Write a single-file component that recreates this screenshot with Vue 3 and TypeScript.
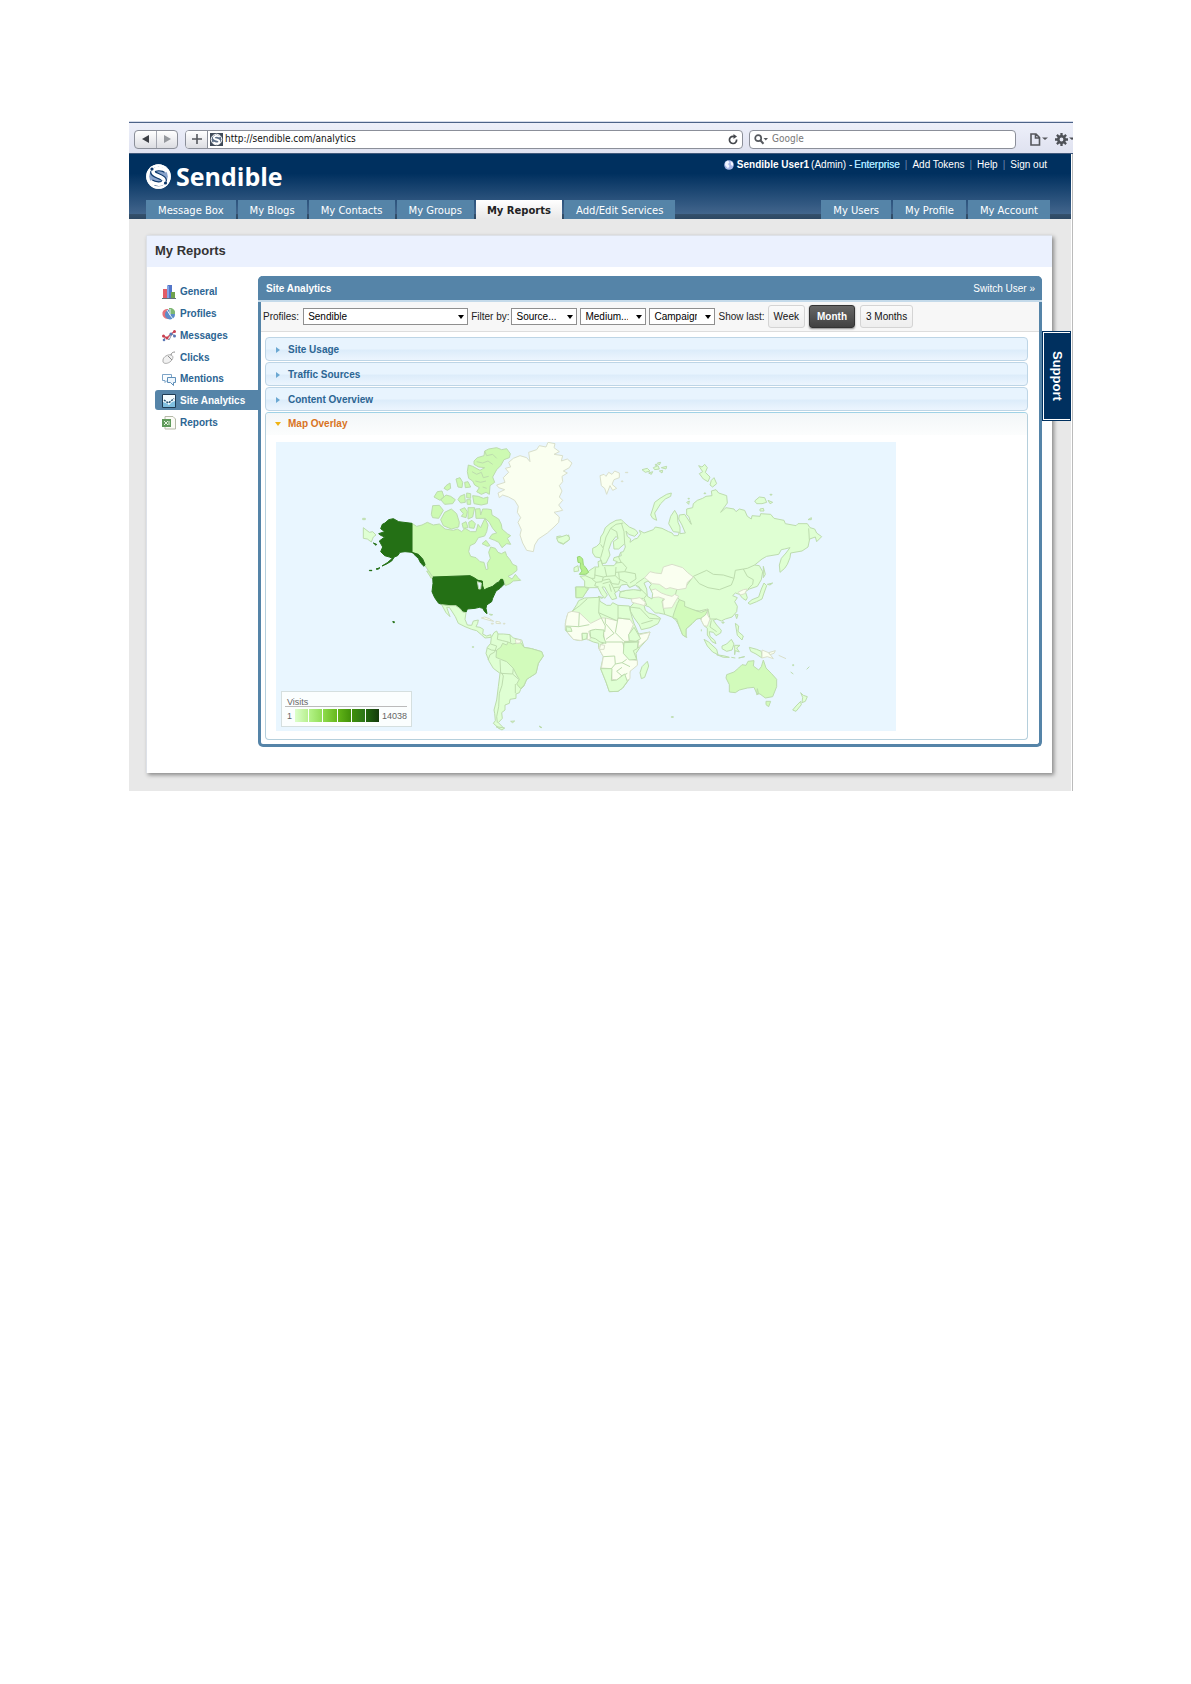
<script setup lang="ts">
import { ref } from 'vue'

interface Land { d: string; tone: string }
interface Region { shift: string; lands: Land[] }

const leftTabs = ['Message Box', 'My Blogs', 'My Contacts', 'My Groups', 'My Reports', 'Add/Edit Services']
const rightTabs = ['My Users', 'My Profile', 'My Account']
const reports = ['General', 'Profiles', 'Messages', 'Clicks', 'Mentions', 'Site Analytics', 'Reports']
const sections = ['Site Usage', 'Traffic Sources', 'Content Overview']
const ranges = ['Week', 'Month', '3 Months']

const url = ref('http://sendible.com/analytics')
const search = ref('')
const range = ref('Month')

const swatches = [
  ['#dcffcb', '#b8f08e'], ['#b4f388', '#92dd58'], ['#8edb4c', '#66b81c'],
  ['#62b518', '#419109'], ['#3f8f0a', '#2b741a'], ['#22680f', '#153a0c'],
]

const regions: Region[] = [
  {
    shift: 'translate(222 -21)',
    lands: [
      { tone: 'pale', d: 'M40 278L58 292L68 290L78 300L70 306L64 321L52 312L40 310ZM38 250h8v4h-8Z' },
      { tone: 'mid', d: 'M186 265L200 274L216 270L232 262L250 270L268 267L285 282L310 286L322 282L335 290L345 280L362 290L378 290L384 268L392 278L399 262L405 250L414 270L410 290L404 303L385 308L375 325L360 332L356 350L362 364L378 368L390 380L402 382L408 404L414 402L412 385L421 370L416 352L422 336L436 340L444 352L454 356L466 350L470 362L480 374L488 388L500 393L501 406L486 418L474 424L486 432L496 418L504 428L512 436L490 438L480 446L466 452L462 436L445 440L425 455L402 464L385 440L372 430L360 422L248 426L236 408L225 392L218 370L205 358L186 352Z' },
      { tone: 'mid', d: 'M372 78L382 68L402 62L404 48L416 42L440 38L455 44L470 41L481 56L478 68L462 74L452 92L440 104L428 126L434 142L420 152L418 178L408 172L394 178L380 170L388 158L374 150L368 138L356 130L352 110L355 90L368 94L390 106L404 98L386 96L372 88Z' },
      { tone: 'mid', d: 'M368 182L385 184L400 190L414 186L412 206L394 210L372 206ZM350 174L362 176L362 190L350 188ZM350 194h12v14h-10ZM330 184L344 178L346 202L332 204L324 194ZM318 132L330 128L338 142L336 158L324 156ZM344 142L354 140L362 156L346 158ZM288 152L300 144L302 160L292 166L282 160ZM252 186L262 170L276 168L282 186L270 196ZM272 194L288 180L302 184L316 194L308 206L284 208Z' },
      { tone: 'mid', d: 'M244 238L248 212L268 211L280 226L266 250L248 248ZM272 254L284 232L304 222L320 236L328 262L326 276L304 282L280 272ZM330 224L344 218L352 230L348 248L334 244L340 236ZM354 218L374 218L368 246L354 252ZM336 266L348 260L354 278L340 280ZM356 262L366 256L376 266L372 280L358 278Z' },
      { tone: 'mid', d: 'M376 222L390 221L392 240L398 222L412 222L424 224L426 240L446 252L454 268L456 282L472 296L482 302L472 310L482 328L470 326L456 338L446 322L434 316L418 310L426 298L440 294L428 280L418 262L406 250L378 250ZM396 326L408 316L420 332L412 334Z' },
      { tone: 'line', d: 'M404 48L410 62L428 58L440 70M380 80L398 84L414 78L428 88M366 110L380 118L394 112L400 128L416 124M376 138L392 142L408 138M398 156L410 160' },
      { tone: 'usa', d: 'M92 281L97 268L105 264L116 254L130 251L146 260L186 265L186 352L165 350L150 352L143 362L133 366L125 378L108 388L96 393L112 383L127 370L118 366L104 362L92 350L98 336L88 318L104 306L92 301L86 296L104 290ZM186 352L205 358L218 372L225 388L222 394L212 384L205 370L192 358ZM70 324L80 328L78 331ZM78 402L90 398L84 403ZM58 406h8v1h-8Z' },
      { tone: 'usa', d: 'M248 426L360 422L372 428L384 436L397 438L398 452L402 465L412 460L428 454L440 444L447 441L452 433L458 433L462 448L450 460L438 468L428 490L425 500L410 510L408 520L411 536L404 530L398 520L388 517L375 520L352 522L348 532L338 530L330 520L318 521L310 512L290 512L266 505L254 488L246 470L249 445ZM128 560h5v3h-3Z' },
      { tone: 'sea', d: 'M382 440L394 444L392 462L386 462L384 450Z' },
      { tone: 'none', d: 'M440 150L465 142L460 128L476 112L466 100L482 96L476 82L490 70L510 62L530 68L540 80L536 52L560 44L568 32L588 36L594 22L615 26L612 38L628 50L612 58L638 62L634 78L652 72L666 84L658 98L640 108L652 114L636 124L638 140L628 152L636 168L628 186L638 196L626 210L638 226L612 232L628 246L626 262L612 276L592 294L565 312L554 330L550 350L530 346L518 324L510 300L514 284L504 262L512 248L502 232L505 214L494 196L476 186L458 180L448 188L444 174L464 164L446 158Z' },
      { tone: 'pale', d: 'M620 305L630 303L640 306L656 300L658 314L640 328L626 322Z' },
      { tone: 'mid', d: 'M236 408L248 426L244 430L230 408Z' },
    ],
  },
  {
    shift: 'translate(222 354)',
    lands: [
      { tone: 'pale', d: 'M275 134L300 137L318 137L330 146L338 156L348 158L345 178L352 195L365 196L370 183L385 180L383 190L378 200L390 202L400 208L398 222L410 228L422 224L424 232L405 234L395 225L380 212L365 208L345 200L325 190L316 170L298 142L290 142L300 170L288 158Z' },
      { tone: 'none', d: 'M394 174L404 171L418 176L431 184L414 180ZM438 184L450 186L452 191L438 190ZM424 190h6v2h-6ZM460 190h5v2h-5Z' },
      { tone: 'pale', d: 'M424 232L432 218L440 213L444 222L460 222L480 224L490 234L515 240L522 262L545 266L575 275L580 288L565 310L558 340L530 358L522 378L512 388L508 398L498 402L498 415L480 418L478 430L465 435L465 450L455 458L457 475L445 488L462 505L448 506L430 490L436 482L434 460L432 450L440 420L445 380L450 340L430 325L418 305L408 280L412 262L422 250Z' },
      { tone: 'low', d: 'M440 270L452 262L458 250L470 255L474 246L488 252L498 250L512 248L522 262L545 266L575 275L580 288L565 310L558 340L530 358L522 376L512 386L500 372L508 358L500 345L490 325L470 305L452 298L438 292Z' },
      { tone: 'none', d: 'M496 238L514 241L510 249L498 250Z' },
      { tone: 'line', d: 'M444 222L442 238L458 242L474 246M422 252L440 258L434 276L420 284L414 300M450 300L452 340L488 342L490 325M455 338L460 348L456 376L448 400L446 440L440 470L442 488M488 342L506 358M496 372L496 400M412 264L424 270L440 272M480 224L482 248' },
      { tone: 'pale', d: 'M482 484L494 483L488 488ZM568 498L576 503L570 502ZM438 500L464 504L456 510ZM367 260h4v2h-4ZM418 162L428 164L422 166Z' },
    ],
  },
  {
    shift: 'translate(822 -21)',
    lands: [
      { tone: 'none', d: 'M150 122L162 118L168 124L176 112L186 118L194 108L208 114L208 128L192 134L186 148L200 160L188 166L180 152L170 178L164 160L154 152ZM214 138h5v2h-5ZM226 112h8v1h-8Z' },
      { tone: 'pale', d: 'M276 104L292 100L300 108L286 112ZM296 114L308 110L304 118ZM310 98L324 92L328 102L314 104ZM322 84L332 82L328 90ZM334 98L350 94L348 102ZM328 108L338 106L336 114ZM316 88h5v3h-5Z' },
      { tone: 'pale', d: 'M302 240L308 222L314 202L330 190L350 178L364 174L362 184L346 192L332 206L322 222L314 234L320 256L308 250ZM410 202L418 198L416 208ZM414 190h4v2h-4Z' },
      { tone: 'pale', d: 'M446 92L456 96L464 88L472 98L466 112L480 126L474 140L460 132L448 116L458 110ZM484 136L492 128L500 146L488 156L480 150ZM614 198L628 186L644 188L650 202L636 206L620 206ZM654 196L668 202L660 206ZM630 222L640 220L642 228L630 228ZM774 254L784 248L784 254ZM660 178h6v2h-6ZM462 174h5v2h-5Z' },
      { tone: 'pale', d: 'M128 340L140 334L150 324L152 306L160 294L166 278L180 266L198 256L214 254L222 262L238 276L256 284L264 294L254 304L236 298L228 288L232 304L242 312L240 322L254 312L262 310L272 296L268 286L282 294L310 284L316 276L336 280L356 290L366 294L372 302L384 302L388 292L370 290L356 266L362 244L374 226L382 240L384 262L390 276L390 296L406 294L396 270L386 252L388 240L404 238L424 268L416 244L410 240L410 222L428 218L430 206L442 196L458 190L468 184L486 182L484 168L498 164L506 174L530 182L532 204L512 232L528 218L552 222L558 230L568 222L584 226L592 244L604 252L606 242L630 244L632 236L662 238L672 250L702 256L706 266L738 272L744 266L772 266L780 278L794 282L800 294L815 305L800 320L796 306L779 312L774 336L756 348L722 354L720 368L712 388L704 400L690 412L688 390L694 370L708 354L720 338L704 342L694 344L686 358L650 364L636 372L614 390L628 392L638 410L634 434L622 454L598 462L586 470L592 488L588 496L578 490L568 478L556 474L548 482L562 488L554 500L562 514L560 530L546 546L526 552L514 558L500 552L490 556L500 570L514 586L512 594L498 602L490 592L478 590L480 604L494 616L498 626L486 620L472 600L472 580L462 572L454 556L450 548L440 552L426 566L408 582L408 606L398 600L386 570L378 556L366 546L344 538L326 534L316 534L298 516L282 510L286 526L296 534L316 540L332 550L324 566L300 578L274 584L268 570L252 548L242 530L240 516L250 506L248 492L232 490L208 486L210 472L228 466L252 462L272 468L268 456L256 450L240 458L232 448L216 450L212 464L206 466L194 474L200 490L186 494L176 478L164 456L156 456L172 480L164 490L154 478L144 458L118 458L108 472L96 488L78 488L76 456L104 456L104 438L90 424L106 422L116 408L134 396L146 396L144 380L154 376L158 392L192 392L202 380L190 376L192 368L214 362L212 352L220 350L226 336L224 326L206 342L192 342L190 320L204 310L198 304L184 322L176 344L180 360L168 384L156 386L150 368L136 366L128 354Z' },
      { tone: 'line', d: 'M152 328L160 340L152 368M160 338L168 306L182 280L198 268L220 264M182 280L200 290L204 310M214 264L222 290L224 326M104 456L118 458M106 422L124 430L134 430L136 398M124 430L138 442L134 452L146 456M134 420L160 426L170 424L164 396M160 426L156 440L138 442M170 424L196 422L198 396M196 422L210 436L206 448L186 446L178 432L158 436M196 384L216 382L230 398L224 410L198 412M224 410L256 416L258 432L240 444M206 412L208 432L232 444M158 446L180 440L190 458L210 456M178 448L184 470M190 458L196 472M212 352L206 366L214 384M98 458L98 488M84 460L86 486' },
      { tone: 'line', d: 'M258 446L284 428M430 424L470 406L490 418L520 420L552 430L556 406L580 402L592 424L610 434L608 448L594 462M430 424L448 446L474 458L508 464L544 450L552 430M430 424L408 454L380 464L376 480L388 494L412 522L448 528L474 522M776 280L778 314M614 390L592 400L580 402M270 460L290 480L282 490L290 510M248 492L280 490M344 484L336 500L344 538M240 516L270 520L298 550L330 552M274 566L308 556M474 522L480 552L500 552M484 556L480 576L500 590' },
      { tone: 'none', d: 'M284 428L300 410L316 414L334 416L340 396L366 388L398 398L412 412L430 426L412 442L408 460L384 464L360 458L348 462L328 448L308 446L298 440Z' },
      { tone: 'none', d: 'M302 466L316 462L334 474L350 480L366 484L374 478L386 484L376 500L366 518L340 520L338 500L344 492L326 486L306 488ZM564 472L580 464L592 462L584 476L572 480ZM244 492L270 488L286 502L284 512L262 506L246 502ZM456 532L474 522L472 538L480 552L472 574L462 572L454 556Z' },
      { tone: 'low', d: 'M372 534L382 506L388 494L404 500L404 514L440 528L454 532L474 524L466 540L452 550L440 552L426 566L408 582L408 606L398 600L386 570L380 552L368 548Z' },
      { tone: 'low', d: 'M78 456L104 456L114 462L98 488L78 488Z' },
      { tone: 'sea', d: 'M206 464L214 450L230 448L238 458L256 450L274 466L250 464L230 466L210 470ZM282 444L294 438L304 448L298 456L308 476L306 492L292 484L290 462Z' },
      { tone: 'strong', d: 'M82 366L90 364L98 372L100 390L108 398L116 412L106 418L88 418L96 408L90 396L92 384L84 382Z' },
      { tone: 'pale', d: 'M72 398L84 392L86 408L72 410ZM594 504L606 494L626 486L634 462L642 444L650 452L642 474L636 492L620 500L600 508ZM640 394L646 418L640 428ZM652 448L668 444L660 450ZM144 484L160 488L154 490ZM20 310L32 306L50 300L58 306L58 314L40 326L24 320Z' },
    ],
  },
  {
    shift: 'translate(822 354)',
    lands: [
      { tone: 'pale', d: 'M66 156L80 134L86 122L104 114L148 112L150 124L170 136L182 136L188 128L204 136L238 138L240 150L248 178L252 190L266 222L300 216L292 238L270 262L258 280L262 314L240 330L236 360L218 384L204 394L178 395L168 366L152 326L160 290L146 264L146 250L130 246L108 236L90 242L70 238L46 210L46 190L52 166Z' },
      { tone: 'none', d: 'M54 158L66 154L88 158L122 190L154 174L166 174L200 182L204 174L240 178L250 194L236 226L238 244L222 246L222 262L240 298L262 302L262 316L240 334L240 356L230 362L220 344L200 360L186 358L184 326L154 324L160 290L146 264L164 244L160 214L128 210L116 214L122 236L112 240L112 220L96 220L96 242L70 238L50 214L46 198L48 180ZM268 224L300 217L292 238L264 262Z' },
      { tone: 'line', d: 'M66 154L88 138L112 116M148 112L146 158L154 174M146 158L200 182M204 136L204 174M240 178L204 174L196 218L222 244L246 244L268 246M88 158L86 200L48 198M86 200L118 194M154 174L166 198L164 216M166 174L166 190L192 220L168 238M222 262L218 246L168 246L150 254M160 290L194 288L196 312L216 308L230 298M196 312L184 326M216 308L240 320M238 246L240 264L268 262M216 322L200 334L216 348L232 340M168 366L184 362M236 244L240 300' },
      { tone: 'pale', d: 'M120 212L136 208L162 210L160 228L168 250L150 246L136 236L122 232ZM48 200L62 202L66 214L50 214ZM96 220L112 220L110 236L98 240ZM236 224L252 202L272 236L258 244L238 242ZM222 248L264 246L262 266L250 272L260 298L238 300L220 280ZM152 326L186 326L184 362L200 360L224 342L232 364L218 384L204 394L178 395L168 366ZM292 304L296 318L284 352L274 356L270 338L276 320Z' },
      { tone: 'low', d: 'M530 344L552 336L566 324L576 314L588 316L594 304L612 302L610 318L626 330L634 320L640 300L648 324L664 340L680 358L680 380L668 410L646 414L630 402L620 400L612 382L592 384L568 390L556 398L538 396L538 374L528 354ZM648 424L662 424L656 440L648 434ZM622 386L626 402L620 404Z' },
      { tone: 'pale', d: 'M462 238L476 246L500 268L504 284L488 276L472 258ZM516 258L530 252L544 238L552 252L546 270L530 274L516 266ZM500 284L524 288L538 292L520 292ZM554 256L570 256L560 264L568 276L556 272L554 284ZM556 190L566 198L564 214L580 228L576 240L562 226ZM598 262L620 268L634 274L636 294L618 282L602 274ZM544 292L556 294M566 294L584 290ZM556 164L564 164L560 176ZM516 186h6v3h-6Z' },
      { tone: 'none', d: 'M636 270L656 278L670 296L652 290L636 294ZM656 278L676 272L672 280L660 284ZM686 286L708 296M152 254L164 256L162 268L148 268Z' },
      { tone: 'pale', d: 'M752 398L760 406L772 410L766 424L756 428L758 412ZM752 424L754 434L738 454L728 450L738 438ZM722 336L730 342M770 328L778 320M728 314h3v3h-3ZM364 470h6v2h-6ZM454 208v6M410 230v4' },
    ],
  },
]
</script>

<template>
  <main class="screen">
    <div class="browser">
      <div class="pair">
        <button type="button" aria-label="Back"><svg width="8" height="8" viewBox="0 0 8 8"><path d="M7 0v8L0 4Z" fill="#3c3f45" /></svg></button>
        <button type="button" aria-label="Forward"><svg width="8" height="8" viewBox="0 0 8 8"><path d="M1 0v8l7-4Z" fill="#96999e" /></svg></button>
      </div>
      <div class="address">
        <button type="button" class="plus" aria-label="Add bookmark"><svg width="10" height="10" viewBox="0 0 10 10"><path d="M5 0v10M0 5h10" stroke="#55585d" stroke-width="1.6" /></svg></button>
        <svg class="favicon" viewBox="0 0 13 13"><rect width="13" height="13" fill="#3f4a58" /><circle cx="6.5" cy="6.5" r="5.3" fill="#5d7088" stroke="#fff" stroke-width="1" /><path d="M9.800 3.800C7 2.200 3.800 2.800 3.800 4.700c0 2.300 5.600 1.300 5.600 4 0 2-3.800 2.300-6.200.7" fill="none" stroke="#fff" stroke-width="1.900" /></svg>
        <input v-model="url" aria-label="Address">
        <svg class="reload" width="10" height="11" viewBox="0 0 10 11"><path d="M8.600 5.500A3.600 3.600 0 1 1 5 2.300h1.500" fill="none" stroke="#44474c" stroke-width="1.700" /><path d="M5.500 0v5L9 2.500Z" fill="#44474c" /></svg>
      </div>
      <div class="search">
        <svg width="14" height="11" viewBox="0 0 14 11"><circle cx="4.200" cy="4.200" r="3" fill="none" stroke="#55585d" stroke-width="1.700" /><path d="M6.300 6.300L9.500 9.700" stroke="#55585d" stroke-width="2" /><path d="M9.500 4h4.500l-2.200 2.500Z" fill="#55585d" /></svg>
        <input v-model="search" placeholder="Google" aria-label="Search">
      </div>
      <div class="tools">
        <button type="button" aria-label="Page menu"><svg width="18" height="13" viewBox="0 0 18 13"><path d="M1 1h5l3.500 3.500V12H1ZM5.500 1v4h4" fill="none" stroke="#55575c" stroke-width="1.600" /><path d="M12 4.500h6l-3 2.500Z" fill="#55575c" /></svg></button>
        <button type="button" aria-label="Settings"><svg width="20" height="13" viewBox="0 0 20 13"><circle cx="6.500" cy="6.500" r="3.200" fill="none" stroke="#4e5157" stroke-width="2.600" /><path d="M6.500 0v3M6.500 10v3M0 6.500H3M10 6.500h3M1.900 1.900L4 4M9 9l2.100 2.100M1.900 11.100L4 9M9 4l2.100-2.100" stroke="#4e5157" stroke-width="2.300" /><path d="M14 4.500h6l-3 2.500Z" fill="#4e5157" /></svg></button>
      </div>
    </div>

    <div class="page">
      <header class="top">
        <nav class="account" aria-label="Account">
          <svg width="10" height="10" viewBox="0 0 10 10"><circle cx="5" cy="5" r="4.800" fill="#a9b7e6" /><path d="M1.500 2L4 .5l1.500 2L4 4l1.500 2L4 8.500 1 5ZM6.500 1l2.500 2v3L7 5Z" fill="#f2f5ff" /></svg>
          <b>Sendible User1</b><span>(Admin) -</span><a href="#" class="plan">Enterprise</a><i>|</i><a href="#">Add Tokens</a><i>|</i><a href="#">Help</a><i>|</i><a href="#">Sign out</a>
        </nav>
        <a href="#" class="logo">
          <svg width="25" height="25" viewBox="0 0 25 25">
            <circle cx="12.500" cy="12.500" r="12.300" fill="#fff" />
            <circle cx="12.500" cy="12.500" r="9.300" fill="#89a3cb" />
            <path d="M20 6.500C16 3 7.500 3.500 7 7.500c-.5 5 11.500 4 11 9.500-.5 4-8 4.500-13 1" fill="none" stroke="#0b376b" stroke-width="6" />
            <path d="M21 7C16.500 3.500 7.500 3.500 7 7.500c-.5 5 11.500 4 11 9.500-.5 4-8 4.500-14 0.500" fill="none" stroke="#fff" stroke-width="3.600" />
            <circle cx="12.500" cy="12.500" r="11" fill="none" stroke="#fff" stroke-width="2.500" />
            <circle cx="6" cy="5" r="1.600" fill="#0b376b" /><circle cx="19.500" cy="19" r="1.600" fill="#0b376b" />
          </svg>
          <span>Sendible</span>
        </a>
        <nav class="tabs" aria-label="Main">
          <a v-for="t in leftTabs" :key="t" href="#" :class="{ current: t === 'My Reports' }">{{ t }}</a>
          <span class="spring" />
          <a v-for="t in rightTabs" :key="t" href="#">{{ t }}</a>
        </nav>
      </header>

      <section class="card">
        <h1>My Reports</h1>
        <div class="columns">
          <nav class="side" aria-label="Reports">
            <a v-for="r in reports" :key="r" href="#" :class="{ current: r === 'Site Analytics' }">
              <svg width="14" height="14" viewBox="0 0 14 14">
                <g v-if="r === 'General'"><path d="M1 4h4v9H1Z" fill="#e25d68" /><path d="M5 1l1-1h4v13H5Z" fill="#5376c9" /><path d="M5 1h2v12H5Z" fill="#83a4e6" /><path d="M9 7h4v6H9Z" fill="#70a14d" /><path d="M0 13.500h14" stroke="#66717c" /></g>
                <g v-else-if="r === 'Profiles'"><path d="M6 2v10C2 12 0 9 .5 5.500 1 3 3.500 1.500 6 2Z" fill="#e6727b" /><path d="M7 1c4 0 6 2 6 5L7 7Z" fill="#79b26c" /><circle cx="8" cy="7.500" r="5" fill="#5b8cc9" /><path d="M7 1c4 0 6 2.500 6 6L8 7Z" fill="#7db872" /><path d="M5 3l3 5 3 4M8 8V2" stroke="#e9f2fb" fill="none" /></g>
                <g v-else-if="r === 'Messages'"><path d="M1 11l3-3 3 3 3-6 3 2" stroke="#8b95a6" fill="none" /><path d="M1 7l4 2 3-3 5-4" stroke="#cc5562" fill="none" stroke-width="1.500" /><g fill="#c93f50"><circle cx="1.500" cy="7" r="1.500" /><circle cx="5" cy="9" r="1.500" /><circle cx="12.500" cy="2.500" r="1.500" /></g><g fill="#5b77b4"><circle cx="2" cy="11" r="1.300" /><circle cx="9" cy="5" r="1.600" /><circle cx="12.500" cy="7" r="1.500" /></g></g>
                <g v-else-if="r === 'Clicks'"><path d="M1 9c0-3 5-6 8-5 3 1 2 4 0 6-3 3-7 3-8 1Z" fill="#f1f1f1" stroke="#aaa" /><path d="M6 5l4 4M9 4c0-2 2-3 4-3" stroke="#8d8d8d" fill="none" /></g>
                <g v-else-if="r === 'Mentions'"><path d="M.5 2.500h9v6H5l-2 2v-2H.5Z" fill="#fafdff" stroke="#7ea4c7" /><path d="M5.500 5.500h8v5h-2v3l-3-3h-3Z" fill="#eef6fd" stroke="#5f8fb9" /></g>
                <g v-else-if="r === 'Site Analytics'"><path d="M.5 .5h13v13H.5Z" fill="#f4fcff" stroke="#1f3c55" /><path d="M1 8l3 1 3 2 3-3 3-1v6H1Z" fill="#7fbfe0" /><path d="M2 6l2 1.500L6.500 9l2.500-2L12 4.500" stroke="#245273" fill="none" stroke-dasharray="2 1" stroke-width="1.500" /></g>
                <g v-else><path d="M3 .5h8l2.500 2.500v10H3Z" fill="#fbfbf6" stroke="#b5b9a8" /><path d="M0 3h9v8H0Z" fill="#5f9a5a" /><path d="M2 5l4 4M6 5L2 9M7 5v4" stroke="#e5f2df" /></g>
              </svg>
              <span>{{ r }}</span>
            </a>
          </nav>

          <section class="panel">
            <div class="panel-head"><h2>Site Analytics</h2><a href="#">Switch User <small>»</small></a></div>
            <form class="filters" @submit.prevent>
              <label for="profile">Profiles:</label>
              <span class="pick wide"><select id="profile"><option>Sendible</option></select></span>
              <label for="source">Filter by:</label>
              <span class="pick"><select id="source"><option>Source...</option></select></span>
              <span class="pick"><select aria-label="Medium"><option>Medium...</option></select></span>
              <span class="pick"><select aria-label="Campaign"><option>Campaign...</option></select></span>
              <span>Show last:</span>
              <span class="ranges">
                <button v-for="r in ranges" :key="r" type="button" :class="{ on: r === range }" @click="range = r">{{ r }}</button>
              </span>
            </form>
            <div class="accordion">
              <button v-for="s in sections" :key="s" type="button" class="fold">
                <svg width="4" height="6" viewBox="0 0 4 6"><path d="M0 0l4 3-4 3Z" fill="#6aa7d2" /></svg>{{ s }}
              </button>
              <section class="open">
                <button type="button" class="fold-open">
                  <svg width="6" height="4" viewBox="0 0 6 4"><path d="M0 0h6L3 4Z" fill="#f0b312" /></svg>Map Overlay
                </button>
                <div class="map">
                  <svg class="world" viewBox="0 0 1860 867" role="img" aria-label="Visits by country">
                    <g v-for="g in regions" :key="g.shift" :transform="g.shift">
                      <path v-for="l in g.lands" :key="l.d" :d="l.d" :class="l.tone" />
                    </g>
                  </svg>
                  <div class="legend">
                    <p>Visits</p>
                    <div class="scale">
                      <span>1</span>
                      <div class="ramp"><i v-for="s in swatches" :key="s[0]" :style="{ background: `linear-gradient(to right, ${s[0]}, ${s[1]})` }" /></div>
                      <span>14038</span>
                    </div>
                  </div>
                </div>
              </section>
            </div>
          </section>
        </div>
      </section>
      <button type="button" class="support">Support</button>
    </div>
  </main>
</template>

<style>
body { margin: 0; background: #fff; }
</style>

<style scoped>
* { box-sizing: border-box; }
button, input, select { font: inherit; color: inherit; margin: 0; padding: 0; border: 0; background: none; outline: 0; }
a { color: inherit; text-decoration: none; }
h1, h2, p { margin: 0; font-size: inherit; }
svg { flex: none; display: block; }

.screen { margin: 121px 118px 0 129px; font: 10px/12px "Liberation Sans", Arial, sans-serif; color: #222; overflow: hidden; }

.browser { display: flex; align-items: center; height: 33px; padding: 3px 0 0 5px; border-top: 1px solid #d5dbea; border-bottom: 1px solid #41597b; background: linear-gradient(#eef0fa, #dfe2f0); box-shadow: inset 0 1px #4c6388; }
.pair { display: flex; height: 19px; border: 1px solid #8b8f99; border-radius: 4px; background: linear-gradient(#fff, #dcdde2); }
.pair button { display: flex; align-items: center; justify-content: center; width: 21px; }
.pair button + button { border-left: 1px solid #a4a7b0; }
.address { flex: 1; display: flex; align-items: center; height: 19px; margin-left: 7px; border: 1px solid #8b8f99; border-radius: 4px; background: #fff; overflow: hidden; }
.plus { display: flex; align-items: center; justify-content: center; width: 22px; height: 17px; border-right: 1px solid #8b8f99; background: linear-gradient(#fff, #dcdde2); }
.favicon { width: 13px; height: 13px; margin: 0 2px; }
.address input { flex: 1; min-width: 0; font: 10px/14px "DejaVu Sans Condensed", "Open Sans", sans-serif; color: #111; }
.reload { margin-right: 4px; }
.search { display: flex; align-items: center; gap: 4px; width: 267px; height: 19px; margin-left: 6px; padding-left: 4px; border: 1px solid #8b8f99; border-radius: 4px; background: #fff; }
.search input { flex: 1; min-width: 0; font: 10px/14px "DejaVu Sans Condensed", "Open Sans", sans-serif; }
.search input::placeholder { color: #777; opacity: 1; }
.tools { display: flex; gap: 7px; width: 57px; padding-left: 14px; overflow: hidden; }

.page { position: relative; padding-bottom: 18px; margin-right: 2px; background: #e8e8e8; box-shadow: 1px 0 #fff, 2px 0 #bbb; }
.top { height: 65px; padding: 0 21px 0 17px; display: flex; flex-wrap: wrap; align-content: space-between; justify-content: space-between; background: linear-gradient(#34506c, #2d4863) bottom / 100% 5px no-repeat, linear-gradient(#00305f 30%, #42658c 92%); color: #fff; }
.account { order: 2; display: flex; align-items: center; height: 12px; margin: 5px 3px 0 0; }
.account svg { margin-right: 3px; }
.account b, .account span { margin-right: 2px; }
.account i { margin: 0 5px; font-style: normal; color: #6c8aad; }
.plan { color: #a9e4ff; text-shadow: 0 0 #a9e4ff; }
.logo { order: 1; display: flex; align-items: center; gap: 5px; height: 25px; margin-top: 10px; font: bold 25px/25px "Open Sans", "Noto Sans", sans-serif; }
.tabs { order: 3; width: 100%; display: flex; gap: 2px; height: 19px; font: 10px/21px "DejaVu Sans", Verdana, sans-serif; }
.tabs a { padding: 0 12px; background: #5584a8; white-space: nowrap; }
.tabs .current { padding: 0 11px; background: linear-gradient(#fff, #e8e8e8); color: #222; font-weight: bold; }
.spring { flex: 1; }

.card { margin: 16px 19px 0 17px; padding-bottom: 26px; border: 1px solid #dde1e8; border-right: 0; border-bottom: 0; background: #fff; box-shadow: 2px 2px 4px #888; }
h1 { height: 31px; padding-left: 8px; background: #ebf1fe; font-size: 13px; line-height: 29px; color: #333; }
.columns { display: flex; padding: 9px 10px 0 8px; }
.side { width: 103px; flex: none; display: flex; flex-direction: column; padding-top: 5px; gap: 2px; }
.side a { display: flex; align-items: center; gap: 4px; height: 20px; padding: 1px 0 0 7px; border-radius: 3px 0 0 3px; font-weight: bold; color: #2c6593; }
.side a:nth-child(4n) { margin-bottom: -1px; }
.side .current { background: #5584a8; color: #fff; }

.panel { flex: 1; min-width: 0; border: 3px solid #5584a8; border-top: 0; border-radius: 5px; }
.panel-head { display: flex; justify-content: space-between; align-items: center; height: 26px; margin: 0 -3px; padding: 2px 7px 0 8px; border-bottom: 2px solid #c4daea; border-radius: 5px 5px 0 0; background: #5584a8; color: #fff; }
small { font-size: 10px; }
.filters { display: flex; align-items: center; height: 30px; padding-left: 2px; border-bottom: 1px solid #ddd; background: #f7f7f7; white-space: nowrap; }
.pick { position: relative; flex: none; width: 66px; height: 17px; margin-right: 3px; border: 1px solid #8f8f8f; background: #fff; }
.pick::after { content: ""; position: absolute; right: 3px; top: 6px; border: 3px solid transparent; border-top: 4px solid #000; border-bottom: 0; pointer-events: none; }
.pick select { display: block; width: 100%; height: 15px; padding: 0 17px 0 4px; appearance: none; line-height: 15px; color: #000; }
.wide { width: 165px; margin-left: 4px; }
.filters label[for="source"] { margin-right: 2px; }
.ranges { display: flex; gap: 4px; margin-left: 3px; }
.ranges button { height: 23px; padding: 0 5px; border: 1px solid #d4d4d4; border-radius: 3px; background: linear-gradient(#fafafa, #eee); color: #111; }
.ranges .on { margin-right: 1px; padding: 0 7px; border-color: #333; background: linear-gradient(#666, #414141); box-shadow: 0 1px 2px #888; color: #fff; font-weight: bold; }

.accordion { display: flex; flex-direction: column; gap: 1px; padding: 5px 11px 4px 4px; }
.fold, .fold-open { display: flex; align-items: center; width: 100%; height: 24px; padding-left: 10px; gap: 8px; font-weight: bold; color: #2c6593; }
.fold { padding-top: 1px; border: 1px solid #bdd5e6; border-radius: 4px; background: linear-gradient(#e8f4fe 50%, #dcecfa 55%, #ecf5fe); }
.open { border: 1px solid #b5cfdc; border-top-color: #9fd2e6; border-radius: 4px; padding-bottom: 8px; }
.fold-open { height: 22px; padding-left: 9px; gap: 7px; border-radius: 4px 4px 0 0; background: linear-gradient(#f2f6f8, #fcfdfd); color: #d9731f; }
.map { position: relative; width: 620px; max-width: 100%; margin: 7px 0 0 10px; background: #e9f6ff; }
.world { width: 100%; }
.world path { stroke: #bddcae; stroke-width: 3; stroke-linejoin: round; }
.world .pale { fill: #dfffd3; }
.world .low { fill: #d2fbbb; }
.world .mid { fill: #cdfab2; }
.world .strong { fill: #b5f08c; stroke: #98d578; }
.world .none { fill: #fafff0; stroke: #d9dfcb; }
.world .usa { fill: #247015; stroke: #247015; }
.world .sea { fill: #e9f6ff; }
.world .line { fill: none; }
.legend { position: absolute; left: 5px; bottom: 4px; width: 131px; height: 36px; padding: 5px 4px 0 3px; border: 1px solid #d5dfdf; background: #fbfefe; color: #666; font-size: 9px; }
.legend p { height: 10px; padding-left: 2px; border-bottom: 1px solid #bbb; line-height: 11px; }
.scale { display: flex; align-items: center; gap: 3px; padding: 2px 0 0 2px; }
.ramp { flex: none; display: flex; gap: 1px; width: 84px; height: 13px; }
.ramp i { flex: 1; }

.support { position: absolute; right: 0; top: 177px; width: 29px; height: 90px; border: 1px solid #00305f; background: #00305f; box-shadow: inset 1px 1px #fff, inset 0 -1px #fff; color: #fff; font-size: 13px; font-weight: bold; writing-mode: vertical-rl; }
</style>
